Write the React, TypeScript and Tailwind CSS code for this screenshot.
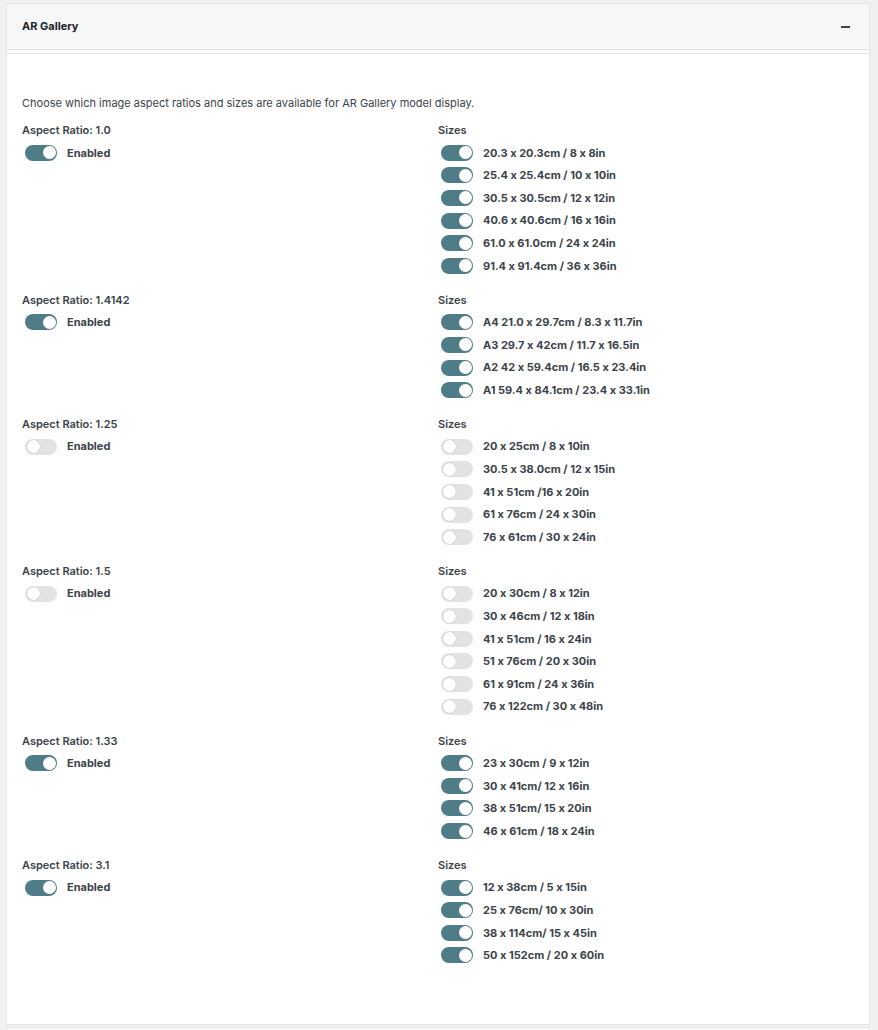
import { useState } from 'react'

type Group = {
  ratio: string
  enabled: boolean
  sizes: string[]
}

const GROUPS: Group[] = [
  {
    ratio: '1.0',
    enabled: true,
    sizes: [
      '20.3 x 20.3cm / 8 x 8in',
      '25.4 x 25.4cm / 10 x 10in',
      '30.5 x 30.5cm / 12 x 12in',
      '40.6 x 40.6cm / 16 x 16in',
      '61.0 x 61.0cm / 24 x 24in',
      '91.4 x 91.4cm / 36 x 36in',
    ],
  },
  {
    ratio: '1.4142',
    enabled: true,
    sizes: [
      'A4 21.0 x 29.7cm / 8.3 x 11.7in',
      'A3 29.7 x 42cm / 11.7 x 16.5in',
      'A2 42 x 59.4cm / 16.5 x 23.4in',
      'A1 59.4 x 84.1cm / 23.4 x 33.1in',
    ],
  },
  {
    ratio: '1.25',
    enabled: false,
    sizes: [
      '20 x 25cm / 8 x 10in',
      '30.5 x 38.0cm / 12 x 15in',
      '41 x 51cm /16 x 20in',
      '61 x 76cm / 24 x 30in',
      '76 x 61cm / 30 x 24in',
    ],
  },
  {
    ratio: '1.5',
    enabled: false,
    sizes: [
      '20 x 30cm / 8 x 12in',
      '30 x 46cm / 12 x 18in',
      '41 x 51cm / 16 x 24in',
      '51 x 76cm / 20 x 30in',
      '61 x 91cm / 24 x 36in',
      '76 x 122cm / 30 x 48in',
    ],
  },
  {
    ratio: '1.33',
    enabled: true,
    sizes: [
      '23 x 30cm / 9 x 12in',
      '30 x 41cm/ 12 x 16in',
      '38 x 51cm/ 15 x 20in',
      '46 x 61cm / 18 x 24in',
    ],
  },
  {
    ratio: '3.1',
    enabled: true,
    sizes: [
      '12 x 38cm / 5 x 15in',
      '25 x 76cm/ 10 x 30in',
      '38 x 114cm/ 15 x 45in',
      '50 x 152cm / 20 x 60in',
    ],
  },
]

function Toggle({ on, onChange }: { on: boolean; onChange: () => void }) {
  return (
    <button
      type="button"
      onClick={onChange}
      className={`relative ml-[3px] h-4 w-8 shrink-0 rounded-full ${on ? 'bg-[#4e7c87]' : 'bg-[#e3e3e3]'}`}
    >
      <span
        className={`absolute top-[1.5px] h-[13px] w-[13px] rounded-full bg-white ${on ? 'left-[17.5px]' : 'left-[1.5px] shadow-[0_0_1px_rgba(0,0,0,0.3)]'}`}
      />
    </button>
  )
}

function Row({ label, on, onChange }: { label: string; on: boolean; onChange: () => void }) {
  return (
    <div className="flex h-[22.6px] items-center gap-[10px]">
      <Toggle on={on} onChange={onChange} />
      <span className="text-[11px] font-bold text-[#3c434a]">{label}</span>
    </div>
  )
}

function GroupBlock({ group }: { group: Group }) {
  const [enabled, setEnabled] = useState(group.enabled)
  const [sizes, setSizes] = useState(group.sizes.map(() => group.enabled))

  return (
    <div className="mb-3 grid grid-cols-2">
      <div>
        <div className="flex h-[22px] items-center text-[11px] font-semibold text-[#3c434a]">
          Aspect Ratio: {group.ratio}
        </div>
        <Row label="Enabled" on={enabled} onChange={() => setEnabled(!enabled)} />
      </div>
      <div>
        <div className="flex h-[22px] items-center text-[11px] font-semibold text-[#3c434a]">Sizes</div>
        {group.sizes.map((s, i) => (
          <Row
            key={s}
            label={s}
            on={sizes[i] ?? false}
            onChange={() => setSizes(sizes.map((v, j) => (j === i ? !v : v)))}
          />
        ))}
      </div>
    </div>
  )
}

export default function App() {
  const [open, setOpen] = useState(true)

  return (
    <div
      className="min-h-[1030px] bg-[#f0f0f1] pl-[6px] pr-[8px] pt-[3px] [font-feature-settings:'calt'_0]"
      style={{ fontFamily: 'Inter, "Liberation Sans", sans-serif' }}
    >
      <div className="border border-[#e6e6e6] bg-white">
        <div className="flex h-[46px] items-center justify-between border-b border-[#e3e3e3] bg-[#f6f7f7] pl-[15px] pr-[16px]">
          <h2 className="text-[11px] font-bold text-[#1d2327]">AR Gallery</h2>
          <button type="button" onClick={() => setOpen(!open)} className="flex h-4 w-4 items-center justify-center">
            <span className="block h-[2px] w-[9px] bg-[#3c434a]" />
          </button>
        </div>
        <div className="h-[4px] border-b border-[#e6e6e6] bg-white" />
        {open && (
          <div className="h-[970px] px-[15px] pt-[41px]">
            <p className="mb-[8px] text-[11px] text-[#3c434a]">
              Choose which image aspect ratios and sizes are available for AR Gallery model display.
            </p>
            {GROUPS.map((g) => (
              <GroupBlock key={g.ratio} group={g} />
            ))}
          </div>
        )}
      </div>
      <div className="mt-[2px] h-4 border border-[#e6e6e6] bg-[#f6f7f7]" />
    </div>
  )
}
